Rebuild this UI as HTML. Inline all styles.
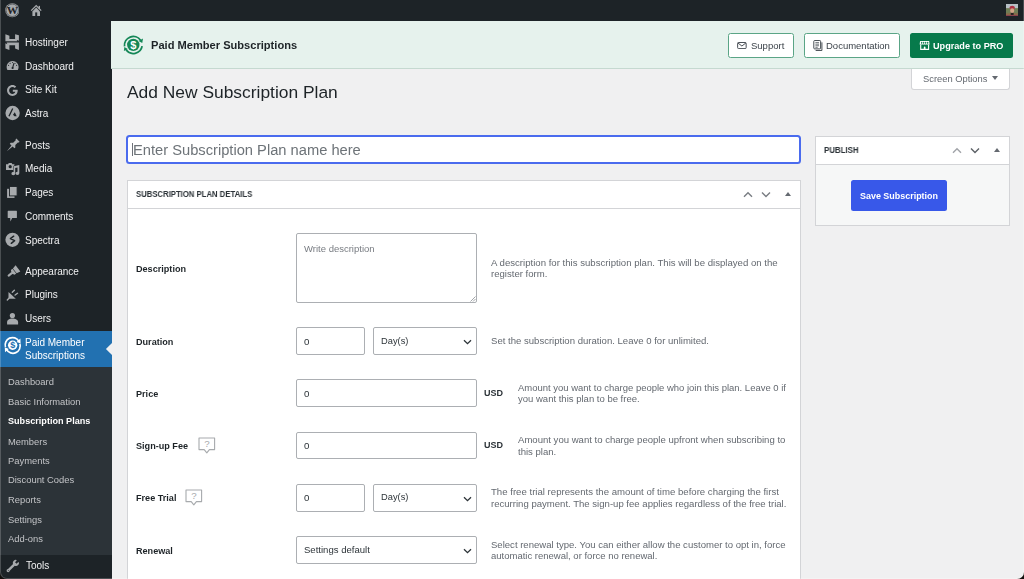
<!DOCTYPE html>
<html><head><meta charset="utf-8"><style>
html,body{margin:0;padding:0;width:1024px;height:579px;overflow:hidden;background:#f0f0f1;}
body{position:relative;font-family:"Liberation Sans",sans-serif;}
.t{position:absolute;white-space:nowrap;line-height:1;will-change:transform;}
.b{position:absolute;}
</style></head><body>
<div class="b" style="left:0.00px;top:0.00px;width:1024.00px;height:21.00px;background:#1d2327;"></div>
<div class="b" style="left:0.00px;top:21.00px;width:111.50px;height:558.00px;background:#1d2327;"></div>
<svg class="b" style="left:4.6px;top:3.1px;" width="14.6" height="14.6" viewBox="0 0 20 20"><circle cx="10" cy="10" r="9.6" fill="#a7aaad"/><circle cx="10" cy="10" r="8.5" fill="none" stroke="#1d2327" stroke-width="0.7"/><text x="10" y="15.6" font-size="15.5" font-weight="bold" text-anchor="middle" fill="#1d2327" font-family="Liberation Serif">W</text></svg>
<svg class="b" style="left:30px;top:4px;" width="12" height="13" viewBox="0 0 12 13"><path d="M1.2 6.6 L6.2 1.6 L11.2 6.6" fill="none" stroke="#a7aaad" stroke-width="1.3"/><rect x="8.6" y="1.9" width="1.4" height="3.2" fill="#a7aaad"/><path d="M2.4 7.6 L6.2 3.6 L10 7.6 L10 12 L2.4 12 Z" fill="#a7aaad"/><rect x="5.2" y="8.4" width="2" height="3.6" fill="#1d2327"/></svg>
<svg class="b" style="left:1006px;top:4px;" width="12.4" height="12.4" viewBox="0 0 12 12"><rect width="12" height="12" fill="#b7c0c6"/><rect x="0" y="4" width="12" height="8" fill="#6f7d55"/><rect x="0" y="9" width="12" height="3" fill="#8a6848"/><ellipse cx="6" cy="3.6" rx="2.6" ry="2" fill="#b03244"/><ellipse cx="6" cy="6.6" rx="2" ry="2.4" fill="#d2a487"/><rect x="4.6" y="8.6" width="2.8" height="2" fill="#2a2222"/><rect x="0" y="10.8" width="12" height="1.2" fill="#8a3a50"/></svg>
<div class="t" style="left:25.30px;top:37.73px;font-size:10px;color:#f0f0f1;">Hostinger</div>
<div class="t" style="left:25.30px;top:61.53px;font-size:10px;color:#f0f0f1;">Dashboard</div>
<div class="t" style="left:25.30px;top:85.33px;font-size:10px;color:#f0f0f1;">Site Kit</div>
<div class="t" style="left:25.30px;top:108.93px;font-size:10px;color:#f0f0f1;">Astra</div>
<div class="t" style="left:25.30px;top:140.83px;font-size:10px;color:#f0f0f1;">Posts</div>
<div class="t" style="left:25.30px;top:164.13px;font-size:10px;color:#f0f0f1;">Media</div>
<div class="t" style="left:25.30px;top:188.03px;font-size:10px;color:#f0f0f1;">Pages</div>
<div class="t" style="left:25.30px;top:211.63px;font-size:10px;color:#f0f0f1;">Comments</div>
<div class="t" style="left:25.30px;top:235.53px;font-size:10px;color:#f0f0f1;">Spectra</div>
<div class="t" style="left:25.30px;top:266.93px;font-size:10px;color:#f0f0f1;">Appearance</div>
<div class="t" style="left:25.30px;top:290.43px;font-size:10px;color:#f0f0f1;">Plugins</div>
<div class="t" style="left:25.30px;top:314.03px;font-size:10px;color:#f0f0f1;">Users</div>
<div class="b" style="left:0.00px;top:331.00px;width:111.50px;height:36.00px;background:#2271b1;"></div>
<div class="t" style="left:25.30px;top:338.03px;font-size:10px;color:#fff;">Paid Member</div>
<div class="t" style="left:25.30px;top:350.83px;font-size:10px;color:#fff;">Subscriptions</div>
<svg class="b" style="left:100px;top:340px;" width="14" height="18" viewBox="0 0 14 18"><path d="M5.9 9 L12 3.1 L12 14.9 Z" fill="#f0f0f1"/></svg>
<div class="b" style="left:0.00px;top:367.00px;width:111.50px;height:187.50px;background:#2c3338;"></div>
<div class="t" style="left:8.10px;top:377.34px;font-size:9.4px;color:#c3c4c7;">Dashboard</div>
<div class="t" style="left:8.10px;top:397.34px;font-size:9.4px;color:#c3c4c7;">Basic Information</div>
<div class="t" style="left:8.10px;top:417.30px;font-size:9.1px;color:#fff;font-weight:bold;">Subscription Plans</div>
<div class="t" style="left:8.10px;top:436.64px;font-size:9.4px;color:#c3c4c7;">Members</div>
<div class="t" style="left:8.10px;top:455.94px;font-size:9.4px;color:#c3c4c7;">Payments</div>
<div class="t" style="left:8.10px;top:475.44px;font-size:9.4px;color:#c3c4c7;">Discount Codes</div>
<div class="t" style="left:8.10px;top:495.04px;font-size:9.4px;color:#c3c4c7;">Reports</div>
<div class="t" style="left:8.10px;top:514.74px;font-size:9.4px;color:#c3c4c7;">Settings</div>
<div class="t" style="left:8.10px;top:534.44px;font-size:9.4px;color:#c3c4c7;">Add-ons</div>
<div class="t" style="left:25.50px;top:561.23px;font-size:10px;color:#f0f0f1;">Tools</div>
<svg class="b" style="left:5px;top:33.6px;" width="14" height="16" viewBox="0 0 14 16"><path d="M0.4 0.2 L4.4 1.8 L4.4 5.0 L11.3 5.0 L12.3 7.2 L0.4 7.2 Z M10.1 0.2 L13.9 1.2 L13.9 6.8 L10.1 5.2 Z M1.6 8.6 L13.9 8.6 L13.9 15.9 L10.1 14.5 L10.1 11.2 L2.8 11.2 Z M0.4 9.2 L4.4 11.2 L4.4 15.9 L0.4 14.4 Z" fill="#a7aaad"/></svg>
<svg class="b" style="left:3px;top:56px;" width="20" height="20" viewBox="0 0 20 20"><path d="M4.4 13.9 A6 6 0 1 1 14.8 13.9 Z" fill="#a7aaad"/><circle cx="5.56" cy="9.33" r="0.55" fill="#1d2327"/><circle cx="7.13" cy="7.28" r="0.55" fill="#1d2327"/><circle cx="9.60" cy="6.50" r="0.55" fill="#1d2327"/><circle cx="12.07" cy="7.28" r="0.55" fill="#1d2327"/><circle cx="13.64" cy="9.33" r="0.55" fill="#1d2327"/><path d="M9.6 11.8 L11 7.2" stroke="#1d2327" stroke-width="1.1"/><circle cx="9.6" cy="12" r="1.1" fill="#1d2327"/></svg>
<svg class="b" style="left:6.2px;top:83.6px;" width="13" height="13" viewBox="0 0 20 20"><path d="M17.5 9 L10.5 9 L10.5 12 L14.3 12 C13.7 14 12 15.3 10 15.3 C7.1 15.3 4.8 13 4.8 10 C4.8 7.1 7.1 4.7 10 4.7 C11.4 4.7 12.6 5.2 13.5 6.1 L15.7 3.9 C14.2 2.5 12.2 1.6 10 1.6 C5.4 1.6 1.6 5.4 1.6 10 C1.6 14.6 5.4 18.4 10 18.4 C14.6 18.4 18 15 18 10 C18 9.6 17.9 9.3 17.5 9 Z" fill="#a7aaad"/></svg>
<svg class="b" style="left:3px;top:103px;" width="20" height="20" viewBox="0 0 20 20"><circle cx="9.6" cy="10" r="7.15" fill="#a7aaad"/><path d="M5.35 13.1 L9.15 5.2 L10.3 5.7 L6.6 13.4 Z M10 11.8 L11.8 9.2 L13.7 13.3 L11.5 13.3 Z" fill="#1d2327"/></svg>
<svg class="b" style="left:3px;top:135px;" width="20" height="20" viewBox="0 0 20 20"><g transform="translate(9.5,10.6) rotate(45) scale(1.02)"><path d="M-2.2 -7.6 L2.2 -7.6 L2.2 -6.3 L1.5 -6.3 L1.5 -2.4 L3.2 -0.7 L3.2 0.6 L0.8 0.6 L0 7.8 L-0.8 0.6 L-3.2 0.6 L-3.2 -0.7 L-1.5 -2.4 L-1.5 -6.3 L-2.2 -6.3 Z" fill="#a7aaad"/></g></svg>
<svg class="b" style="left:3px;top:158px;" width="20" height="20" viewBox="0 0 20 20"><path d="M3 6.2 L5 6.2 L5.8 5.1 L8.6 5.1 L9.4 6.2 L11.4 6.2 L11.4 12 L3 12 Z" fill="#a7aaad"/><circle cx="7.2" cy="8.7" r="1.6" fill="#1d2327"/><path d="M10.6 8.2 L16.3 7.1 L16.3 15.2 A1.9 1.6 0 1 1 14.5 13.7 L14.5 9.4 L12.2 9.9 L12.2 15.6 A1.9 1.6 0 1 1 10.6 14.1 Z" fill="#a7aaad" stroke="#1d2327" stroke-width="0.9" paint-order="stroke"/></svg>
<svg class="b" style="left:3px;top:182px;" width="20" height="20" viewBox="0 0 20 20"><path d="M4.1 6.8 L11.5 6.8 L11.5 15.9 L4.1 15.9 Z" fill="#a7aaad"/><rect x="6.5" y="4.5" width="7.6" height="9.4" fill="#a7aaad" stroke="#1d2327" stroke-width="0.9"/></svg>
<svg class="b" style="left:3px;top:206px;" width="20" height="20" viewBox="0 0 20 20"><path d="M5.2 4.8 L13.4 4.8 Q13.9 4.8 13.9 5.3 L13.9 11.4 Q13.9 11.9 13.4 11.9 L9.2 11.9 L7.4 15.4 L7.2 11.9 L5.2 11.9 Q4.7 11.9 4.7 11.4 L4.7 5.3 Q4.7 4.8 5.2 4.8 Z" fill="#a7aaad"/></svg>
<svg class="b" style="left:3px;top:230px;" width="20" height="20" viewBox="0 0 20 20"><circle cx="9.5" cy="9.85" r="7.1" fill="#a7aaad"/><path d="M10.7 6.2 L7.4 8.6 L11.6 10.7 L8.3 13.3" fill="none" stroke="#1d2327" stroke-width="1.5" stroke-linejoin="round" stroke-linecap="round"/></svg>
<svg class="b" style="left:3px;top:262px;" width="20" height="20" viewBox="0 0 20 20"><g transform="translate(9.9,10.3) rotate(52) scale(0.92)"><path d="M-4.2 -7.0 L4.2 -7.0 L3.3 -2.6 L-3.3 -2.6 Z M-3.3 -1.9 L3.3 -1.9 L3.3 0.1 L1.3 1.2 L-1.3 1.2 L-3.3 0.1 Z M-1.2 1.2 L1.2 1.2 L1.2 5.8 A1.2 1.2 0 0 1 -1.2 5.8 Z" fill="#a7aaad"/></g></svg>
<svg class="b" style="left:3px;top:285px;" width="20" height="20" viewBox="0 0 20 20"><path d="M5.5 6.9 L12.8 13.8 L6.6 13.8 Q5.5 13.8 5.5 12.7 Z" fill="#a7aaad"/><path d="M6 13.3 L4.3 15 M9.3 7.3 L11.4 5.2 M12.1 10 L14.5 8.3" stroke="#a7aaad" stroke-width="1.4" stroke-linecap="round"/></svg>
<svg class="b" style="left:3px;top:306px;" width="20" height="20" viewBox="0 0 20 20"><circle cx="9.4" cy="9.5" r="2.6" fill="#a7aaad"/><path d="M4.1 18.4 L4.1 16.3 C4.1 13.8 6.6 12.6 9.4 12.6 C12.2 12.6 15.1 13.8 15.1 16.3 L15.1 18.4 Z" fill="#a7aaad"/></svg>
<svg class="b" style="left:3px;top:335px;" width="20" height="20" viewBox="0 0 20 20"><path d="M2.5 12.0 A7.3 7.3 0 0 1 15.8 6.2" fill="none" stroke="#fff" stroke-width="1.7"/><path d="M16.9 8.8 A7.3 7.3 0 0 1 3.6 14.6" fill="none" stroke="#fff" stroke-width="1.7"/><path d="M13.6 6.9 L17.4 3.4 L17.6 8.4 Z M5.8 13.9 L2.0 17.2 L1.8 12.2 Z" fill="#fff"/><circle cx="9.65" cy="10.2" r="4.7" fill="#fff"/><text x="9.65" y="13.4" font-size="9" font-weight="bold" text-anchor="middle" fill="#2271b1" font-family="Liberation Sans">$</text></svg>
<svg class="b" style="left:3px;top:556px;" width="20" height="20" viewBox="0 0 20 20"><g transform="translate(8.2,11.6) rotate(45) scale(0.92)"><path d="M-1.3 -3 L-1.3 -4.2 C-2.8 -4.8 -3.4 -6 -3.4 -7.3 C-3.4 -8.3 -3 -9.1 -2.3 -9.7 L-1.2 -9.7 L-1.2 -7.1 L1.2 -7.1 L1.2 -9.7 L2.3 -9.7 C3 -9.1 3.4 -8.3 3.4 -7.3 C3.4 -6 2.8 -4.8 1.3 -4.2 L1.3 3.6 A1.7 1.7 0 1 1 -1.3 3.6 Z" fill="#a7aaad"/><circle cx="0" cy="4.4" r="0.5" fill="#1d2327"/></g></svg>
<div class="b" style="left:111.40px;top:21.30px;width:912.60px;height:46.70px;background:#e6f2ed;border-bottom:1px solid #c5d9d0;"></div>
<svg class="b" style="left:120px;top:32px;" width="26" height="24" viewBox="0 0 26 24"><path d="M4.53 14.45 A8.9 8.9 0 0 1 20.6 8.2" fill="none" stroke="#148757" stroke-width="1.8"/><path d="M22.11 14.14 A8.9 8.9 0 0 1 6.0 17.6" fill="none" stroke="#148757" stroke-width="1.8"/><path d="M22.25 10.9 L23.0 6.6 L18.6 8.9 Z M4.34 15.0 L3.9 19.0 L7.8 17.0 Z" fill="#148757"/><circle cx="13.3" cy="12.9" r="6.2" fill="#148757"/><text x="13.3" y="16.8" font-size="11" font-weight="bold" text-anchor="middle" fill="#fff" font-family="Liberation Sans">$</text></svg>
<div class="t" style="left:151.10px;top:39.50px;font-size:11.1px;color:#1d2327;font-weight:bold;">Paid Member Subscriptions</div>
<div class="b" style="left:728.00px;top:32.50px;width:66.00px;height:25.50px;background:#fff;border:1.2px solid #5aa586;border-radius:2.5px;box-sizing:border-box;"></div>
<svg class="b" style="left:737.2px;top:41.7px;" width="9.8" height="7.1" viewBox="0 0 20 15"><rect x="1" y="1" width="18" height="13" rx="2" fill="none" stroke="#3c434a" stroke-width="2"/><path d="M1.5 2 L10 8.5 L18.5 2" fill="none" stroke="#3c434a" stroke-width="2"/></svg>
<div class="t" style="left:750.60px;top:41.06px;font-size:9.5px;color:#3c434a;">Support</div>
<div class="b" style="left:804.00px;top:32.50px;width:96.00px;height:25.50px;background:#fff;border:1.2px solid #5aa586;border-radius:2.5px;box-sizing:border-box;"></div>
<svg class="b" style="left:812.5px;top:40px;" width="10.5" height="11.5" viewBox="0 0 20 22"><rect x="1.5" y="1" width="13" height="16" rx="1.5" fill="none" stroke="#3c434a" stroke-width="1.8"/><path d="M17 4.5 L17 20 L5 20" fill="none" stroke="#3c434a" stroke-width="1.8"/><path d="M4.5 5 L11.5 5 M4.5 8 L11.5 8 M4.5 11 L11.5 11 M4.5 14 L9 14" stroke="#3c434a" stroke-width="1.4"/></svg>
<div class="t" style="left:826.30px;top:41.06px;font-size:9.5px;color:#3c434a;">Documentation</div>
<div class="b" style="left:910.00px;top:32.50px;width:103.00px;height:25.30px;background:#077a4b;border-radius:2.5px;"></div>
<svg class="b" style="left:919px;top:40px;" width="11" height="11" viewBox="0 0 11 11"><path d="M1.1 1 L10.1 1 L10.6 4.5 L0.6 4.5 Z" fill="#fff"/><rect x="2.1" y="1.8" width="1.1" height="2" rx="0.5" fill="#077a4b"/><rect x="4.1" y="1.8" width="1.1" height="2" rx="0.5" fill="#077a4b"/><rect x="6.1" y="1.8" width="1.1" height="2" rx="0.5" fill="#077a4b"/><rect x="8.1" y="1.8" width="1.1" height="2" rx="0.5" fill="#077a4b"/><path d="M1.7 4.5 L1.7 9.4 L9.6 9.4 L9.6 4.5" fill="none" stroke="#fff" stroke-width="1.1"/><path d="M4.8 9.6 L4.8 7.4 A0.85 0.85 0 0 1 6.5 7.4 L6.5 9.6 Z" fill="#fff"/></svg>
<div class="t" style="left:933.30px;top:41.65px;font-size:9.15px;color:#fff;font-weight:bold;">Upgrade to PRO</div>
<div class="b" style="left:911.00px;top:68.50px;width:98.60px;height:21.10px;background:#fff;border:1px solid #d3d4d7;border-top:0;border-radius:0 0 3px 3px;box-sizing:border-box;"></div>
<div class="t" style="left:923.00px;top:75.08px;font-size:9.35px;color:#646970;">Screen Options</div>
<div class="b" style="left:992.3px;top:76px;width:0;height:0;border-style:solid;border-width:4.6px 3px 0 3px;border-color:#646970 transparent transparent transparent;"></div>
<div class="t" style="left:127.00px;top:83.67px;font-size:17.4px;color:#1d2327;">Add New Subscription Plan</div>
<div class="b" style="left:126.10px;top:134.80px;width:674.90px;height:29.50px;background:#fff;border:2px solid #4a6bee;border-radius:3.5px;box-sizing:border-box;"></div>
<div class="t" style="left:133.00px;top:142.75px;font-size:14.7px;color:#6d7378;">Enter Subscription Plan name here</div>
<div class="b" style="left:132.10px;top:142.80px;width:0.90px;height:13.20px;background:#6d7178;"></div>
<div class="b" style="left:127.00px;top:179.50px;width:674.00px;height:410.50px;background:#fff;border:1px solid #d3d4d7;box-sizing:border-box;"></div>
<div class="b" style="left:128.00px;top:207.50px;width:672.00px;height:1.00px;background:#d3d4d7;"></div>
<div class="t" style="left:136.10px;top:190.20px;font-size:8.5px;color:#2c3338;font-weight:bold;transform:scaleX(0.9091);transform-origin:0 0;">SUBSCRIPTION PLAN DETAILS</div>
<svg class="b" style="left:743px;top:190.5px;" width="10" height="7" viewBox="0 0 10 7"><path d="M1 5.8 L5 1.8 L9 5.8" fill="none" stroke="#787c82" stroke-width="1.4"/></svg>
<svg class="b" style="left:761px;top:190.5px;" width="10" height="7" viewBox="0 0 10 7"><path d="M1 1.5 L5 5.5 L9 1.5" fill="none" stroke="#787c82" stroke-width="1.4"/></svg>
<div class="b" style="left:785px;top:191.5px;width:0;height:0;border-style:solid;border-width:0 3px 4.5px 3px;border-color:transparent transparent #646970 transparent;"></div>
<div class="b" style="left:815.00px;top:135.50px;width:195.00px;height:90.00px;background:#f6f7f7;border:1px solid #d3d4d7;box-sizing:border-box;"></div>
<div class="b" style="left:816.00px;top:136.50px;width:193.00px;height:27.50px;background:#fff;border-bottom:1px solid #d3d4d7;"></div>
<div class="t" style="left:823.70px;top:146.40px;font-size:8.5px;color:#2c3338;font-weight:bold;transform:scaleX(0.9247);transform-origin:0 0;">PUBLISH</div>
<svg class="b" style="left:952px;top:146.5px;" width="10" height="7" viewBox="0 0 10 7"><path d="M1 5.8 L5 1.8 L9 5.8" fill="none" stroke="#a0a3a8" stroke-width="1.4"/></svg>
<svg class="b" style="left:970px;top:146.5px;" width="10" height="7" viewBox="0 0 10 7"><path d="M1 1.5 L5 5.5 L9 1.5" fill="none" stroke="#5c6166" stroke-width="1.4"/></svg>
<div class="b" style="left:994px;top:147.5px;width:0;height:0;border-style:solid;border-width:0 3px 4.5px 3px;border-color:transparent transparent #646970 transparent;"></div>
<div class="b" style="left:850.50px;top:179.50px;width:96.20px;height:31.20px;background:#3858e9;border-radius:2.5px;"></div>
<div class="t" style="left:859.70px;top:192.12px;font-size:8.95px;color:#fff;font-weight:bold;">Save Subscription</div>
<div class="t" style="left:136.20px;top:264.60px;font-size:9.1px;color:#1d2327;font-weight:bold;">Description</div>
<div class="b" style="left:296.20px;top:233.00px;width:180.70px;height:70.00px;background:#fff;border:1px solid #acafb3;border-radius:2px;box-sizing:border-box;"></div>
<div class="t" style="left:304.20px;top:243.66px;font-size:9.5px;color:#787c82;">Write description</div>
<svg class="b" style="left:469.5px;top:296px;" width="6" height="6" viewBox="0 0 6 6"><path d="M5.5 0.5 L0.5 5.5 M5.5 3 L3 5.5" stroke="#8c8f94" stroke-width="0.8"/></svg>
<div class="t" style="left:490.90px;top:257.65px;font-size:9.62px;color:#646970;">A description for this subscription plan. This will be displayed on the</div>
<div class="t" style="left:490.90px;top:268.90px;font-size:9.57px;color:#646970;">register form.</div>
<div class="t" style="left:136.20px;top:337.60px;font-size:9.1px;color:#1d2327;font-weight:bold;">Duration</div>
<div class="b" style="left:296.20px;top:327.40px;width:69.10px;height:27.40px;background:#fff;border:1px solid #acafb3;border-radius:2px;box-sizing:border-box;"></div>
<div class="t" style="left:304.00px;top:336.79px;font-size:9.7px;color:#2c3338;">0</div>
<div class="b" style="left:372.70px;top:327.40px;width:103.90px;height:27.40px;background:#fff;border:1px solid #acafb3;border-radius:2px;box-sizing:border-box;"></div>
<div class="t" style="left:380.70px;top:336.83px;font-size:9.3px;color:#2c3338;">Day(s)</div>
<svg class="b" style="left:462.6px;top:339.3px;" width="9" height="6" viewBox="0 0 9 6"><path d="M1 1.2 L4.5 4.7 L8 1.2" fill="none" stroke="#2c3338" stroke-width="1.3"/></svg>
<div class="t" style="left:490.90px;top:336.40px;font-size:9.57px;color:#646970;">Set the subscription duration. Leave 0 for unlimited.</div>
<div class="t" style="left:136.20px;top:389.80px;font-size:9.1px;color:#1d2327;font-weight:bold;">Price</div>
<div class="b" style="left:296.20px;top:379.40px;width:180.40px;height:27.30px;background:#fff;border:1px solid #acafb3;border-radius:2px;box-sizing:border-box;"></div>
<div class="t" style="left:304.00px;top:388.79px;font-size:9.7px;color:#2c3338;">0</div>
<div class="t" style="left:484.40px;top:389.38px;font-size:9.0px;color:#2c3338;font-weight:bold;">USD</div>
<div class="t" style="left:517.50px;top:383.08px;font-size:9.47px;color:#646970;">Amount you want to charge people who join this plan. Leave 0 if</div>
<div class="t" style="left:517.50px;top:394.23px;font-size:9.53px;color:#646970;">you want this plan to be free.</div>
<div class="t" style="left:136.20px;top:442.20px;font-size:9.1px;color:#1d2327;font-weight:bold;">Sign-up Fee</div>
<div class="b" style="left:296.20px;top:431.50px;width:180.40px;height:27.80px;background:#fff;border:1px solid #acafb3;border-radius:2px;box-sizing:border-box;"></div>
<div class="t" style="left:304.00px;top:441.19px;font-size:9.7px;color:#2c3338;">0</div>
<div class="t" style="left:484.40px;top:441.38px;font-size:9.0px;color:#2c3338;font-weight:bold;">USD</div>
<div class="t" style="left:517.50px;top:435.30px;font-size:9.57px;color:#646970;">Amount you want to charge people upfront when subscribing to</div>
<div class="t" style="left:517.50px;top:446.50px;font-size:9.57px;color:#646970;">this plan.</div>
<svg class="b" style="left:197.6px;top:437px;" width="18" height="17.5" viewBox="0 0 18 17.5"><path d="M1 1 L16.6 1 L16.6 12.6 L11.4 12.6 L8.8 15.9 L6.2 12.6 L1 12.6 Z" fill="#fff" stroke="#a7aaad" stroke-width="1.1" stroke-linejoin="round"/><text x="8.9" y="10.1" font-size="9.8" text-anchor="middle" fill="#a7aaad" font-family="Liberation Sans">?</text></svg>
<div class="t" style="left:136.20px;top:494.40px;font-size:9.1px;color:#1d2327;font-weight:bold;">Free Trial</div>
<svg class="b" style="left:185.3px;top:489.2px;" width="18" height="17.5" viewBox="0 0 18 17.5"><path d="M1 1 L16.6 1 L16.6 12.6 L11.4 12.6 L8.8 15.9 L6.2 12.6 L1 12.6 Z" fill="#fff" stroke="#a7aaad" stroke-width="1.1" stroke-linejoin="round"/><text x="8.9" y="10.1" font-size="9.8" text-anchor="middle" fill="#a7aaad" font-family="Liberation Sans">?</text></svg>
<div class="b" style="left:296.20px;top:484.00px;width:69.10px;height:27.50px;background:#fff;border:1px solid #acafb3;border-radius:2px;box-sizing:border-box;"></div>
<div class="t" style="left:304.00px;top:493.49px;font-size:9.7px;color:#2c3338;">0</div>
<div class="b" style="left:372.70px;top:484.00px;width:103.90px;height:27.50px;background:#fff;border:1px solid #acafb3;border-radius:2px;box-sizing:border-box;"></div>
<div class="t" style="left:380.70px;top:493.48px;font-size:9.3px;color:#2c3338;">Day(s)</div>
<svg class="b" style="left:462.6px;top:495.95px;" width="9" height="6" viewBox="0 0 9 6"><path d="M1 1.2 L4.5 4.7 L8 1.2" fill="none" stroke="#2c3338" stroke-width="1.3"/></svg>
<div class="t" style="left:490.90px;top:487.45px;font-size:9.62px;color:#646970;">The free trial represents the amount of time before charging the first</div>
<div class="t" style="left:490.90px;top:498.70px;font-size:9.57px;color:#646970;">recurring payment. The sign-up fee applies regardless of the free trial.</div>
<div class="t" style="left:136.20px;top:546.60px;font-size:9.1px;color:#1d2327;font-weight:bold;">Renewal</div>
<div class="b" style="left:296.20px;top:536.20px;width:180.40px;height:27.50px;background:#fff;border:1px solid #acafb3;border-radius:2px;box-sizing:border-box;"></div>
<div class="t" style="left:304.20px;top:545.46px;font-size:9.55px;color:#2c3338;">Settings default</div>
<svg class="b" style="left:462.6px;top:548.1500000000001px;" width="9" height="6" viewBox="0 0 9 6"><path d="M1 1.2 L4.5 4.7 L8 1.2" fill="none" stroke="#2c3338" stroke-width="1.3"/></svg>
<div class="t" style="left:490.90px;top:539.91px;font-size:9.56px;color:#646970;">Select renewal type. You can either allow the customer to opt in, force</div>
<div class="t" style="left:490.90px;top:551.16px;font-size:9.5px;color:#646970;">automatic renewal, or force no renewal.</div>
<div class="b" style="left:0px;top:-10px;width:1024px;height:589px;border-radius:0 0 7px 7px;box-shadow:0 0 0 30px #120f0c;border:1.2px solid rgba(255,255,255,.2);border-top:0;box-sizing:border-box;"></div>
</body></html>
